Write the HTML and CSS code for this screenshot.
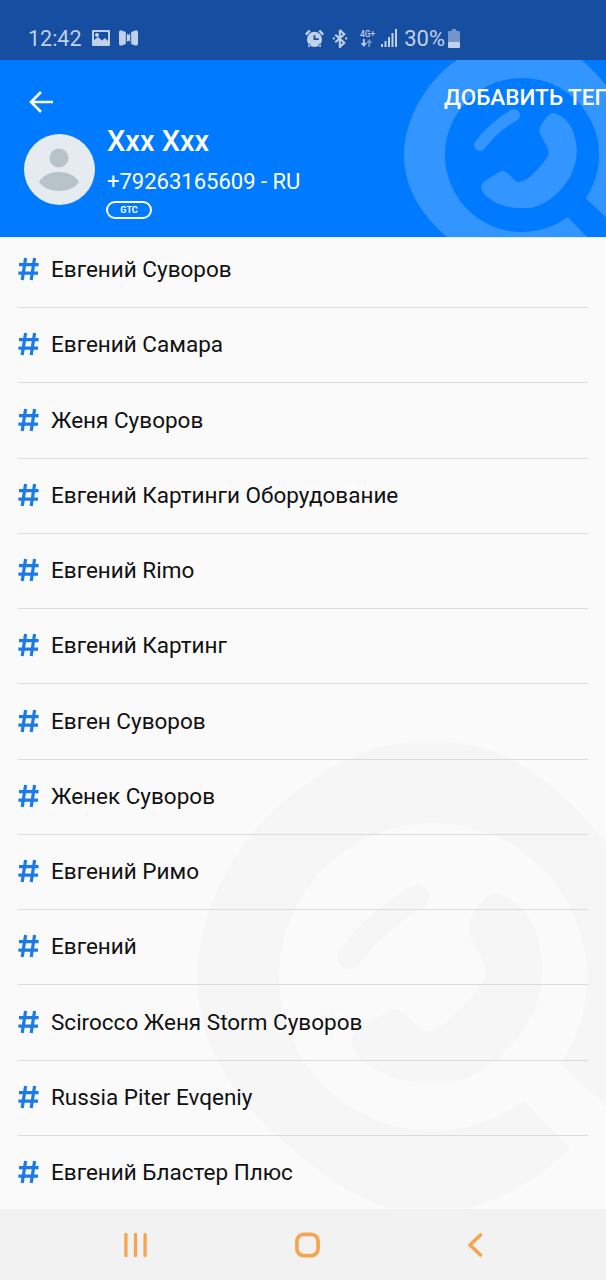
FILE: index.html
```html
<!DOCTYPE html>
<html lang="ru">
<head>
<meta charset="utf-8">
<title>Теги</title>
<link rel="stylesheet" href="styles.css">
</head>
<body>
<svg class="defs" width="0" height="0" aria-hidden="true">
  <defs>
    <symbol id="mark" viewBox="-120 -120 300 300">
      <path fill-rule="evenodd" d="M-118 0C-118-38-92-78-65-95C-45-110-25-118-4-118C30-118 50-106 73.500-82C95-60 108-30 108 0C108 35 95 58 78 77C55 100 30 118-4 118C-30 118-52 102-75 82C-98 62-118 35-118 0ZM0-77A77 77 0 1 0 0 77A77 77 0 1 0 0-77Z"/>
      <path class="mark-cut" d="M50 45L63.500 43L130 106L110 128L45 61.500Z"/>
      <path d="M34.700-41C47-36 53-24 54.700-8C56 12 46 30 31.300 41.700C21 50 10 54 1.300 53C-12 54-28 49-37 40C-43 33-41 29-36 25L-22 16.700C-16 13-11 23-5.300 26.700C-2 28 4 25 8 21.700C14 16 24 6 26.300 0C28-7 21-14 18-21.700C16-27 21-33 24-37C28-42 31-43 34.700-41Z"/>
      <path d="M-42-10C-33-22-20-33-8-40" fill="none" stroke="currentColor" stroke-width="12" stroke-linecap="round"/>
    </symbol>
    <symbol id="hash" viewBox="0 0 21 24">
      <path d="M7.600 1L4.200 23M16.600 1L13.200 23M1 7.600H20.600M.4 16.200H20" fill="none" stroke="currentColor" stroke-width="3.200"/>
    </symbol>
  </defs>
</svg>

<div class="status">
  <div class="status-left">
    <span class="clock">12:42</span>
    <svg class="ic-gallery" viewBox="0 0 18 16"><path fill-rule="evenodd" d="M1 0H17A1 1 0 0 1 18 1V15A1 1 0 0 1 17 16H1A1 1 0 0 1 0 15V1A1 1 0 0 1 1 0ZM2 2V10L6 7L10 10.500L13 8L16 11V2ZM5 3A2 2 0 1 1 5 7A2 2 0 1 1 5 3Z"/></svg>
    <svg class="ic-maps" viewBox="0 0 19 16"><path d="M0 2.500C0 .8 1.300 0 2.800 .5L6.800 2V14L2.800 15.500C1.300 16 0 15.200 0 13.500ZM12.200 2L16.200 .5C17.700 0 19 .8 19 2.500V13.500C19 15.200 17.700 16 16.200 15.500L12.200 14ZM7.800 3.500L9.500 5L11.200 3.500V12L9.500 10.500L7.800 12Z"/></svg>
  </div>
  <div class="status-right">
    <svg class="ic-alarm" viewBox="0 0 20 20"><path fill-rule="evenodd" d="M10 3A8 8 0 1 1 10 19A8 8 0 1 1 10 3ZM9 6.500V11.500H14.500V9.800H11V6.500ZM0 5L4 .8L6 2.400L1.800 6.800ZM20 5L16 .8L14 2.400L18.200 6.800ZM3 17L5 15.500L6 17L4 19.500ZM17 17L15 15.500L14 17L16 19.500Z"/></svg>
    <svg class="ic-bt" viewBox="0 0 16 20"><path d="M7.800 1V19L12.500 14.500L3 6M7.800 1L12.500 5.500L3 14" fill="none" stroke="currentColor" stroke-width="2.200"/><circle cx="1.500" cy="10" r="1.200"/><circle cx="14.500" cy="10" r="1.200"/></svg>
    <div class="net">
      <span class="net-label">4G+</span>
      <svg class="ic-arrows" viewBox="0 0 14 9"><path d="M3 0H5V4.500H7.500L4 9L.5 4.500H3Z"/><path class="dim" d="M9 9H11V4.500H13.500L10 0L6.500 4.500H9Z"/></svg>
    </div>
    <svg class="ic-signal" viewBox="0 0 16 18"><path d="M0 15H2V18H0ZM3.500 12H5.500V18H3.500ZM7 8H9V18H7ZM10.500 4H12.500V18H10.500ZM14 0H16V18H14Z"/></svg>
    <span class="pct">30%</span>
    <svg class="ic-battery" viewBox="0 0 12 19"><path class="dim" d="M4 0H8V2H11A1 1 0 0 1 12 3V13H0V3A1 1 0 0 1 1 2H4Z"/><path d="M0 13H12V18A1 1 0 0 1 11 19H1A1 1 0 0 1 0 18Z"/></svg>
  </div>
</div>

<header class="header">
  <svg class="mark mark-top"><use href="#mark"/></svg>
  <div class="toolbar">
    <svg class="back" viewBox="0 0 26 24"><path d="M25 12H3M13 2L3 12L13 22" fill="none" stroke="currentColor" stroke-width="2.600"/></svg>
    <span class="add-tag">ДОБАВИТЬ ТЕГ</span>
  </div>
  <div class="contact">
    <div class="avatar">
      <svg viewBox="0 0 71 71"><circle cx="35" cy="24" r="9.500"/><path d="M15 48C19 41 27 38 35 38C43 38 51 41 55 48C51 54 43 57 35 57C27 57 19 54 15 48Z"/></svg>
    </div>
    <div class="contact-info">
      <div class="name">Xxx Xxx</div>
      <div class="phone">+79263165609 - RU</div>
      <span class="pill">GTC</span>
    </div>
  </div>
</header>

<main class="content">
  <svg class="mark mark-bottom"><use href="#mark"/></svg>
  <ul class="tags">
    <li class="tag"><svg class="hash"><use href="#hash"/></svg>Евгений Суворов</li>
    <li class="tag"><svg class="hash"><use href="#hash"/></svg>Евгений Самара</li>
    <li class="tag"><svg class="hash"><use href="#hash"/></svg>Женя Суворов</li>
    <li class="tag"><svg class="hash"><use href="#hash"/></svg>Евгений Картинги Оборудование</li>
    <li class="tag"><svg class="hash"><use href="#hash"/></svg>Евгений Rimo</li>
    <li class="tag"><svg class="hash"><use href="#hash"/></svg>Евгений Картинг</li>
    <li class="tag"><svg class="hash"><use href="#hash"/></svg>Евген Суворов</li>
    <li class="tag"><svg class="hash"><use href="#hash"/></svg>Женек Суворов</li>
    <li class="tag"><svg class="hash"><use href="#hash"/></svg>Евгений Римо</li>
    <li class="tag"><svg class="hash"><use href="#hash"/></svg>Евгений</li>
    <li class="tag"><svg class="hash"><use href="#hash"/></svg>Scirocco Женя Storm Суворов</li>
    <li class="tag"><svg class="hash"><use href="#hash"/></svg>Russia Piter Evqeniy</li>
    <li class="tag"><svg class="hash"><use href="#hash"/></svg>Евгений Бластер Плюс</li>
  </ul>
</main>

<nav class="navbar">
  <svg class="nav-recent" viewBox="0 0 24 24"><path d="M2 1V23M12 1V23M22 1V23" fill="none" stroke="currentColor" stroke-width="3.400" stroke-linecap="round"/></svg>
  <svg class="nav-home" viewBox="0 0 26 26"><rect x="2" y="2" width="22" height="22" rx="7" fill="none" stroke="currentColor" stroke-width="3.800"/></svg>
  <svg class="nav-back" viewBox="0 0 16 24"><path d="M13.500 2L3 12L13.500 22" fill="none" stroke="currentColor" stroke-width="3.600" stroke-linecap="round" stroke-linejoin="round"/></svg>
</nav>
</body>
</html>
```

FILE: styles.css
```css
* {
  box-sizing: border-box;
}

html,
body {
  margin: 0;
  height: 100%;
}

body {
  display: flex;
  flex-direction: column;
  height: 1280px;
  overflow: hidden;
  background: #fafafa;
  font-family: Roboto, "Liberation Sans", sans-serif;
  color: #111;
}

.defs {
  position: absolute;
}

/* Status bar */
.status {
  flex: 0 0 60px;
  display: flex;
  justify-content: space-between;
  align-items: center;
  padding: 16px 146px 0 28px;
  background: #164ea1;
  color: #c2d0e8;
  fill: #c2d0e8;
}

.status-left,
.status-right {
  display: flex;
  align-items: center;
}

.clock {
  font-size: 21.500px;
}

.ic-gallery {
  width: 18px;
  height: 16px;
  margin-left: 10px;
}

.ic-maps {
  width: 19px;
  height: 16px;
  margin-left: 9px;
}

.ic-alarm {
  width: 19px;
  height: 19px;
}

.ic-bt {
  width: 16px;
  height: 19px;
  margin-left: 8px;
}

.net {
  display: flex;
  flex-direction: column;
  align-items: center;
  width: 19px;
  margin-left: 10px;
}

.net-label {
  font-size: 8.500px;
  font-weight: 500;
  line-height: 10px;
}

.ic-arrows {
  width: 13px;
  height: 8px;
  margin-right: 3px;
}

.dim {
  opacity: .55;
}

.ic-signal {
  width: 16px;
  height: 18px;
  margin-left: 4px;
}

.pct {
  margin-left: 7px;
  font-size: 22px;
}

.ic-battery {
  width: 12px;
  height: 19px;
  margin-left: 3px;
}

/* Contact header */
.header {
  position: relative;
  flex: 0 0 177px;
  height: 177px;
  overflow: hidden;
  background: #007aff;
  color: #fff;
}

.mark {
  position: absolute;
  overflow: visible;
}

.mark-top {
  --mark-cut: #007aff;
  left: 402px;
  top: -25px;
  width: 300px;
  height: 300px;
  fill: #3395ff;
  color: #3395ff;
}

.mark-bottom {
  --mark-cut: #fafafa;
  left: 193px;
  top: 499px;
  width: 600px;
  height: 600px;
  fill: #f6f6f6;
  color: #f6f6f6;
}

.mark-cut {
  fill: var(--mark-cut);
}

.toolbar {
  position: relative;
  display: flex;
  justify-content: space-between;
  padding: 23px 0 0 28px;
  height: 74px;
}

.back {
  width: 26px;
  height: 24px;
  margin-top: 6.500px;
}

.add-tag {
  margin-right: -1px;
  font-size: 22.500px;
  font-weight: 500;
  line-height: 28px;
  white-space: nowrap;
}

.contact {
  position: relative;
  display: flex;
  padding-left: 24px;
}

.avatar {
  flex: none;
  width: 71px;
  height: 71px;
  border-radius: 50%;
  background: #e6ebf0;
}

.avatar svg {
  display: block;
  width: 71px;
  height: 71px;
  fill: #b8c2c9;
}

.contact-info {
  display: flex;
  flex-direction: column;
  align-items: flex-start;
  margin-left: 12px;
  margin-top: -10px;
}

.name {
  font-size: 29px;
  font-weight: 500;
  line-height: 34px;
}

.phone {
  margin-top: 10px;
  font-size: 22px;
  line-height: 28px;
}

.pill {
  margin: 5px 0 0 -1px;
  width: 46px;
  height: 18px;
  border: 2px solid #fff;
  border-radius: 9px;
  font-size: 9px;
  font-weight: 700;
  line-height: 14px;
  text-align: center;
}

/* Tag list */
.content {
  position: relative;
  flex: 1;
  min-height: 0;
  overflow: hidden;
  border-top: 1px solid #e4eefb;
}

.tags {
  position: relative;
  list-style: none;
  margin: -5.250px 18px 0;
  padding: 0;
}

.tag {
  display: flex;
  align-items: center;
  height: 75.250px;
  padding-bottom: 1.500px;
  border-bottom: 1px solid #dcdcdc;
  font-size: 22.500px;
  color: #111;
}

.hash {
  flex: none;
  width: 21px;
  height: 24px;
  margin-right: 12px;
  color: #1a7be8;
}

/* Navigation bar */
.navbar {
  position: relative;
  flex: 0 0 71px;
  display: flex;
  justify-content: space-between;
  align-items: center;
  padding: 1px 123px 0 124px;
  background: #f2f2f2;
  color: #f6a54f;
}

.nav-recent {
  width: 23px;
  height: 24px;
}

.nav-home {
  width: 25px;
  height: 26px;
}

.nav-back {
  width: 16px;
  height: 24px;
}
```
